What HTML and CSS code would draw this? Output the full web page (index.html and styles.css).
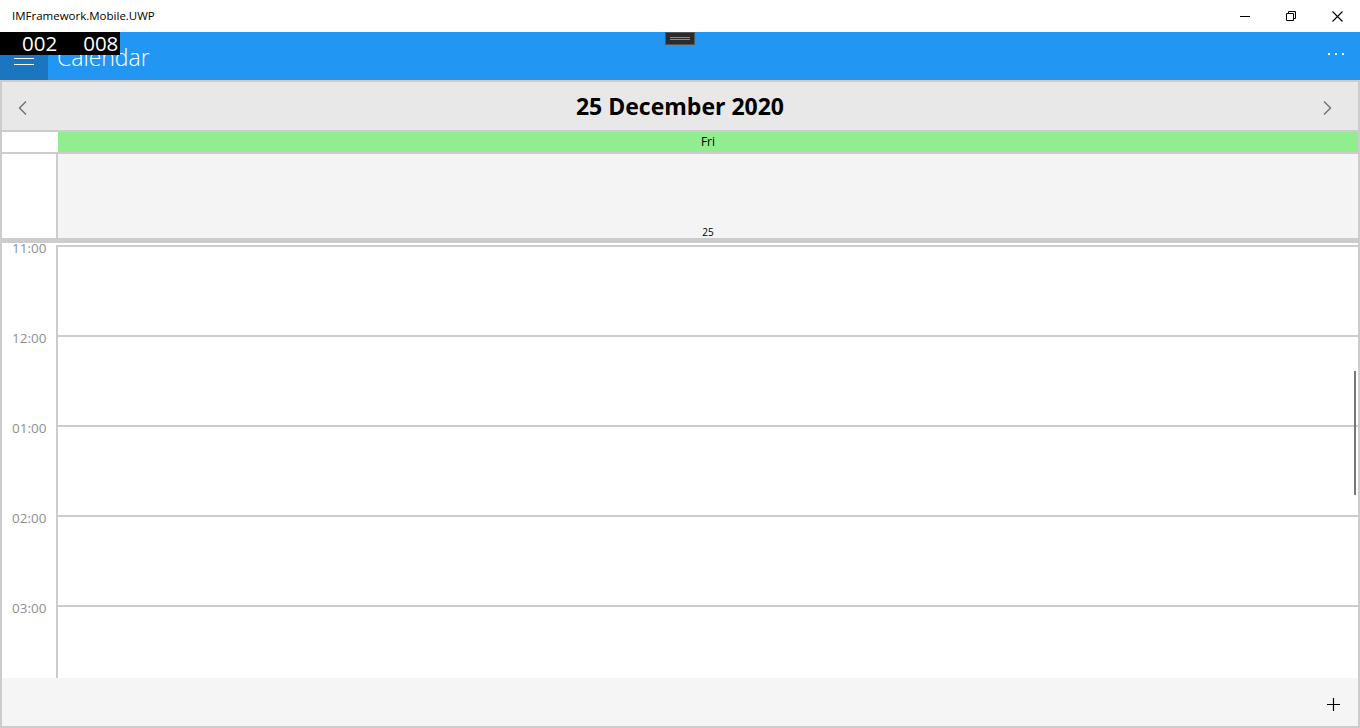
FILE: index.html
```html
<!DOCTYPE html>
<html>
<head>
<meta charset="utf-8">
<link rel="stylesheet" href="styles.css">
</head>
<body>
<div class="window">
  <div class="titlebar">
    <div class="app-title">IMFramework.Mobile.UWP</div>
    <div class="win-buttons">
      <div class="win-btn"><svg width="10" height="10" viewBox="0 0 10 10"><path d="M0 5.5H10" stroke="#000" stroke-width="1"/></svg></div>
      <div class="win-btn"><svg width="10" height="10" viewBox="0 0 10 10"><path d="M0.5 2.5H7.5V9.5H0.5Z M2.5 2.5V0.5H9.5V7.5H7.5" stroke="#000" stroke-width="1" fill="none"/></svg></div>
      <div class="win-btn"><svg width="11" height="11" viewBox="0 0 11 11"><path d="M0.5 0.5L10.5 10.5M10.5 0.5L0.5 10.5" stroke="#000" stroke-width="1.1"/></svg></div>
    </div>
  </div>
  <div class="appbar">
    <div class="hamburger">
      <svg width="20" height="14" viewBox="0 0 20 14"><path d="M0 1.5H20M0 7.5H20M0 13.5H20" stroke="#fff" stroke-width="1"/></svg>
    </div>
    <div class="page-title">Calendar</div>
    <div class="more"><span></span><span></span><span></span></div>
  </div>
  <div class="counter"><span>002</span><span>008</span></div>
  <div class="handle"><i></i><i></i></div>

  <div class="calendar">
    <div class="cal-header">
      <div class="nav nav-left"><svg width="9" height="14" viewBox="0 0 9 14"><path d="M8 0.5L1.5 7L8 13.5" stroke="#6d6d6d" stroke-width="1.3" fill="none"/></svg></div>
      <div class="cal-date">25 December 2020</div>
      <div class="nav nav-right"><svg width="9" height="14" viewBox="0 0 9 14"><path d="M1 0.5L7.5 7L1 13.5" stroke="#6d6d6d" stroke-width="1.3" fill="none"/></svg></div>
    </div>
    <div class="hsep"></div>
    <div class="day-row">
      <div class="corner"></div>
      <div class="day-name">Fri</div>
    </div>
    <div class="hsep"></div>
    <div class="allday-row">
      <div class="side"></div>
      <div class="vsep"></div>
      <div class="allday">25</div>
    </div>
    <div class="band"></div>
    <div class="grid">
      <div class="grid-inner">
        <div class="hour"><div class="label">11:00</div><div class="vsep"></div><div class="slot"></div></div>
        <div class="hour"><div class="label">12:00</div><div class="vsep"></div><div class="slot"></div></div>
        <div class="hour"><div class="label">01:00</div><div class="vsep"></div><div class="slot"></div></div>
        <div class="hour"><div class="label">02:00</div><div class="vsep"></div><div class="slot"></div></div>
        <div class="hour"><div class="label">03:00</div><div class="vsep"></div><div class="slot"></div></div>
      </div>
      <div class="scrollbar"></div>
    </div>
    <div class="bottom-bar">
      <svg width="13" height="13" viewBox="0 0 13 13"><path d="M6.5 0V13M0 6.5H13" stroke="#000" stroke-width="1.2"/></svg>
    </div>
  </div>
</div>
</body>
</html>
```

FILE: styles.css
```css
* { box-sizing: border-box; }
html, body { margin: 0; padding: 0; }
body {
  width: 1360px;
  height: 728px;
  overflow: hidden;
  background: #fff;
  font-family: "Open Sans", "Noto Sans", sans-serif;
}
.window {
  position: relative;
  width: 1360px;
  height: 728px;
  display: flex;
  flex-direction: column;
}
.titlebar {
  height: 32px;
  display: flex;
  align-items: center;
  justify-content: space-between;
  background: #fff;
}
.app-title {
  padding-left: 12px;
  font-size: 11.5px;
  color: #000;
  padding-bottom: 2px;
}
.win-buttons { display: flex; height: 32px; }
.win-btn {
  width: 46px;
  height: 32px;
  display: flex;
  align-items: center;
  justify-content: center;
}
.appbar {
  height: 48px;
  background: #2196f3;
  display: flex;
  align-items: center;
}
.hamburger {
  width: 48px;
  height: 48px;
  background: #1b76c2;
  display: flex;
  align-items: center;
  justify-content: center;
  padding-top: 4px;
}
.page-title {
  margin-left: 9px;
  color: #fff;
  font-size: 23px;
  font-weight: 300;
  flex: 1;
  padding-top: 2px;
}
.more {
  width: 48px;
  display: flex;
  gap: 5px;
  justify-content: center;
  margin-bottom: 4px;
}
.more span {
  width: 2px;
  height: 2px;
  background: #fff;
}
.counter {
  position: absolute;
  left: 0;
  top: 32px;
  width: 120px;
  height: 23px;
  background: #000;
  color: #fff;
  font-size: 20.5px;
  line-height: 22px;
  display: flex;
  gap: 26px;
  padding-left: 22px;
}
.handle {
  position: absolute;
  left: 665px;
  top: 32px;
  width: 30px;
  height: 13px;
  background: #2b2b2b;
  border: 1px solid #555;
  display: flex;
  flex-direction: column;
  align-items: center;
  justify-content: center;
  gap: 1px;
}
.handle i {
  display: block;
  width: 20px;
  height: 1px;
  background: #8a8a8a;
}
.calendar {
  height: 648px;
  border: 2px solid #cccccc;
  display: flex;
  flex-direction: column;
}
.cal-header {
  height: 48px;
  background: #e8e8e8;
  display: flex;
  align-items: center;
}
.nav {
  width: 50px;
  display: flex;
  align-items: center;
  padding-top: 3px;
}
.nav-left { padding-left: 16px; }
.nav-right { justify-content: flex-end; padding-right: 26px; }
.cal-date {
  flex: 1;
  text-align: center;
  font-size: 23px;
  font-weight: 700;
  color: #000;
  padding-bottom: 1px;
}
.hsep { height: 2px; background: #cccccc; }
.day-row {
  height: 20px;
  display: flex;
}
.corner { width: 56px; background: #fff; }
.day-name {
  flex: 1;
  background: #90ee90;
  font-size: 12px;
  line-height: 20px;
  text-align: center;
  color: #000;
}
.allday-row {
  height: 84px;
  display: flex;
}
.side { width: 54px; background: #fff; }
.vsep { width: 2px; background: #cccccc; }
.allday {
  flex: 1;
  background: #f4f4f4;
  display: flex;
  align-items: flex-end;
  justify-content: center;
  font-size: 10px;
  line-height: 12px;
  color: #000;
}
.band { height: 5px; background: #cccccc; }
.grid {
  height: 435px;
  position: relative;
  overflow: hidden;
  background: #fff;
}
.grid-inner {
  display: flex;
  flex-direction: column;
  padding-top: 2px;
}
.hour {
  height: 90px;
  display: flex;
  flex-shrink: 0;
}
.label {
  width: 54px;
  font-size: 13.5px;
  color: #8f8f8f;
  padding-left: 10px;
  line-height: 16px;
  margin-top: -5px;
  height: 95px;
  margin-bottom: -5px;
}
.slot {
  flex: 1;
  border-top: 2px solid #cccccc;
}
.scrollbar {
  position: absolute;
  right: 2px;
  top: 128px;
  width: 2px;
  height: 124px;
  background: #777;
}
.bottom-bar {
  height: 48px;
  background: #f5f5f5;
  display: flex;
  align-items: center;
  justify-content: flex-end;
  padding-right: 18px;
  padding-top: 4px;
}
```
